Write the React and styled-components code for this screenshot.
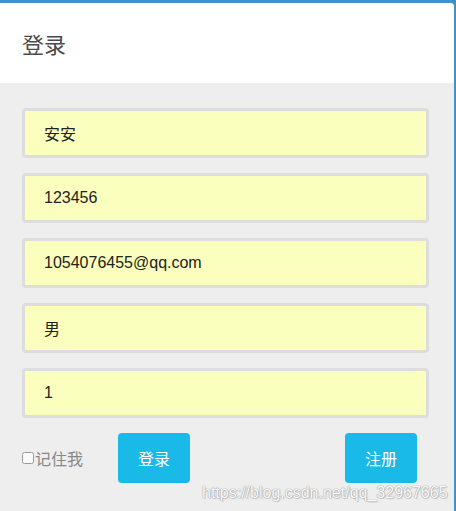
import React from "react";
import styled, { createGlobalStyle } from "styled-components";

const Global = createGlobalStyle`
  html, body { margin: 0; padding: 0; }
  body {
    background: #3f91c8;
    font-family: "Liberation Sans", Arial, "Noto Sans CJK SC", sans-serif;
    overflow: hidden;
  }
`;

const Panel = styled.div`
  position: relative;
  margin-top: 3px;
  width: 454px;
  height: 508px;
  background: #eeeeee;
  border-top-right-radius: 4px;
  overflow: hidden;
`;

const Header = styled.div`
  height: 80px;
  background: #ffffff;
  display: flex;
  align-items: center;
  padding-left: 22px;
`;

const Title = styled.h2`
  margin: 0;
  font-size: 22px;
  font-weight: normal;
  color: #4a4a4a;
  font-family: "Noto Sans CJK SC", sans-serif;
`;

const Body = styled.div`
  padding: 25px 25px 0 22px;
  display: flex;
  flex-direction: column;
  gap: 15px;
`;

const Field = styled.input`
  box-sizing: border-box;
  width: 407px;
  height: 50px;
  border: 3px solid #dddddd;
  border-radius: 4px;
  background: #faffbd;
  padding: 0 19px;
  font-size: 16px;
  color: #222;
  font-family: "Liberation Sans", Arial, "Noto Sans CJK SC", sans-serif;
  outline: none;
`;

const Footer = styled.div`
  display: flex;
  align-items: center;
  padding: 0 37px 0 22px;
  margin-top: 15px;
`;

const Remember = styled.label`
  width: 96px;
  display: flex;
  align-items: center;
  color: #888888;
  font-size: 16px;
  font-family: "Noto Sans CJK SC", sans-serif;
`;

const Check = styled.input`
  margin: 0 1px 0 0;
  width: 12px;
  height: 12px;
  opacity: 0.7;
`;

const Button = styled.button`
  width: 72px;
  height: 50px;
  border: none;
  border-radius: 4px;
  background: #19b9e8;
  color: #ffffff;
  font-size: 16px;
  font-family: "Noto Sans CJK SC", sans-serif;
  margin-left: ${(p) => (p.$right ? "auto" : "0")};
  cursor: pointer;
`;

const Watermark = styled.div`
  position: absolute;
  left: 202px;
  top: 481px;
  font-size: 16px;
  font-family: "Liberation Sans", Arial, sans-serif;
  color: #fafafa;
  text-shadow: 0 0 1px #999, 0 0 1px #999, 1px 1px 1px #ccc;
  white-space: nowrap;
`;

export default function App() {
  const values = ["安安", "123456", "1054076455@qq.com", "男", "1"];
  return (
    <>
      <Global />
      <Panel>
        <Header>
          <Title>登录</Title>
        </Header>
        <Body>
          {values.map((v, i) => (
            <Field key={i} defaultValue={v} />
          ))}
        </Body>
        <Footer>
          <Remember>
            <Check type="checkbox" />
            记住我
          </Remember>
          <Button>登录</Button>
          <Button $right>注册</Button>
        </Footer>
        <Watermark>https://blog.csdn.net/qq_32967665</Watermark>
      </Panel>
    </>
  );
}
